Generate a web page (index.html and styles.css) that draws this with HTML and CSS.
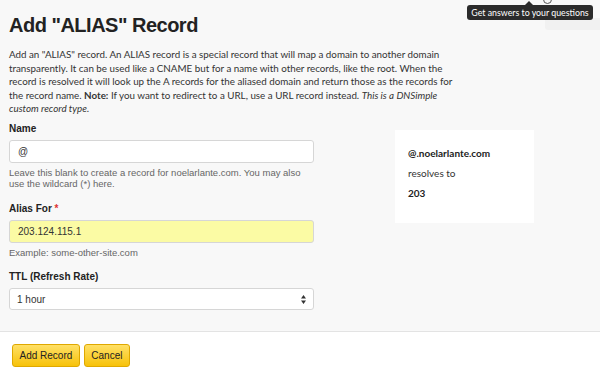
FILE: index.html
```html
<!DOCTYPE html>
<html lang="en">
<head>
    <meta charset="UTF-8">
    <meta name="viewport" content="width=device-width, initial-scale=1.0">
    <title>Add ALIAS Record</title>
    <link rel="stylesheet" href="styles.css">
</head>
<body>
    <div class="help-tip">
        <span class="help-icon"></span>
        <div class="help-shadow"></div>
        <div class="tooltip">Get answers to your questions</div>
    </div>

    <div class="content">
        <h1>Add "ALIAS" Record</h1>
        <p class="intro">
            Add an "ALIAS" record. An ALIAS record is a special record that will map a domain to another domain
            transparently. It can be used like a CNAME but for a name with other records, like the root. When the
            record is resolved it will look up the A records for the aliased domain and return those as the records for
            the record name. <strong>Note:</strong> If you want to redirect to a URL, use a URL record instead. <em>This is a DNSimple
            custom record type.</em>
        </p>

        <div class="form-layout">
            <form id="recordForm" class="record-form">
                <div class="form-group">
                    <label for="name">Name</label>
                    <input type="text" id="name" name="name" value="@">
                    <div class="hint">Leave this blank to create a record for noelarlante.com. You may also use the wildcard (*) here.</div>
                </div>
                <div class="form-group">
                    <label for="content">Alias For <abbr>*</abbr></label>
                    <input type="text" id="content" name="content" class="autofilled" value="203.124.115.1">
                    <div class="hint">Example: some-other-site.com</div>
                </div>
                <div class="form-group">
                    <label for="ttl">TTL (Refresh Rate)</label>
                    <div class="select-wrap">
                        <select id="ttl" name="ttl">
                            <option>1 hour</option>
                        </select>
                        <svg class="select-arrows" width="5" height="9" viewBox="0 0 5 9">
                            <path d="M2.5 0 L5 3.5 H0 Z M2.5 9 L0 5.5 H5 Z" fill="#333"/>
                        </svg>
                    </div>
                </div>
            </form>

            <div class="preview">
                <div class="preview-name">@.noelarlante.com</div>
                <div class="preview-text">resolves to</div>
                <div class="preview-name">203</div>
            </div>
        </div>
    </div>

    <div class="actions">
        <button type="submit" form="recordForm" class="btn">Add Record</button>
        <button type="button" class="btn">Cancel</button>
    </div>
</body>
</html>
```

FILE: styles.css
```css
* {
    box-sizing: border-box;
    margin: 0;
    padding: 0;
}

body {
    font-family: "Liberation Sans", Arial, sans-serif;
    background-color: #fff;
    color: #333;
    position: relative;
}

.content {
    background-color: #f8f8f8;
    border-bottom: 1px solid #e3e3e3;
    padding: 13px 9px 0 9px;
    height: 332px;
}

h1 {
    font-size: 20px;
    font-weight: bold;
    letter-spacing: -0.5px;
    color: #222;
    line-height: 24px;
    margin-bottom: 11px;
}

.intro {
    font-family: Lato, sans-serif;
    font-size: 9.8px;
    line-height: 13.5px;
    color: #333;
    width: 451px;
    margin-bottom: 7px;
}

.intro strong {
    font-weight: bold;
}

.form-layout {
    display: flex;
    align-items: flex-start;
}

.record-form {
    width: 305px;
}

.form-group {
    margin-bottom: 13px;
}

.form-group label {
    display: block;
    font-size: 10px;
    line-height: 12px;
    font-weight: bold;
    color: #222;
    margin-bottom: 5px;
}

.form-group label abbr {
    color: #d33;
}

.form-group input,
.form-group select {
    width: 100%;
    height: 23px;
    padding: 0 8px;
    border: 1px solid #d6d6d6;
    border-radius: 3px;
    background-color: #fff;
    font-family: "Liberation Sans", Arial, sans-serif;
    font-size: 10px;
    color: #333;
}

.form-group input.autofilled {
    background-color: #fbfba4;
}

.select-wrap {
    position: relative;
}

.form-group select {
    appearance: none;
    -webkit-appearance: none;
    height: 22px;
    padding-left: 7px;
}

.select-arrows {
    position: absolute;
    right: 8px;
    top: 7px;
}

.hint {
    font-size: 9.5px;
    line-height: 11.5px;
    color: #666;
    margin-top: 4px;
}

.preview {
    margin-left: 81px;
    margin-top: 7px;
    width: 139px;
    height: 93px;
    background-color: #fff;
    padding: 13px 13px;
    font-family: Lato, sans-serif;
    font-size: 10px;
    color: #333;
}

.preview-name {
    font-weight: bold;
    color: #222;
    line-height: 20px;
}

.preview-text {
    line-height: 20px;
}

.actions {
    display: flex;
    gap: 4px;
    padding: 12px 12px;
}

.btn {
    height: 23px;
    padding: 0 6.5px;
    font-family: "Liberation Sans", Arial, sans-serif;
    font-size: 10px;
    color: #222;
    background: linear-gradient(#ffe066, #f7c20a);
    border: 1px solid #dfa800;
    border-radius: 3px;
    cursor: pointer;
}

.btn:hover {
    background: linear-gradient(#ffd84a, #eeb400);
}

.help-tip {
    position: absolute;
    top: 0;
    right: 0;
    width: 140px;
    height: 32px;
}

.help-icon {
    position: absolute;
    left: 83px;
    top: -5px;
    width: 9px;
    height: 9px;
    border: 1px solid #555;
    border-radius: 50%;
}

.help-shadow {
    position: absolute;
    left: 85px;
    top: 18px;
    width: 60px;
    height: 12px;
    background-color: #f1f1f1;
    border-radius: 3px;
}

.tooltip {
    position: absolute;
    left: 7px;
    top: 5px;
    width: 126px;
    height: 15px;
    background-color: #2b2b2b;
    color: #fff;
    border-radius: 3px;
    font-family: Lato, sans-serif;
    font-size: 8.8px;
    line-height: 15px;
    text-align: center;
    white-space: nowrap;
}

.tooltip::before {
    content: "";
    position: absolute;
    top: -4px;
    left: 58px;
    border-left: 4px solid transparent;
    border-right: 4px solid transparent;
    border-bottom: 4px solid #2b2b2b;
}
```
